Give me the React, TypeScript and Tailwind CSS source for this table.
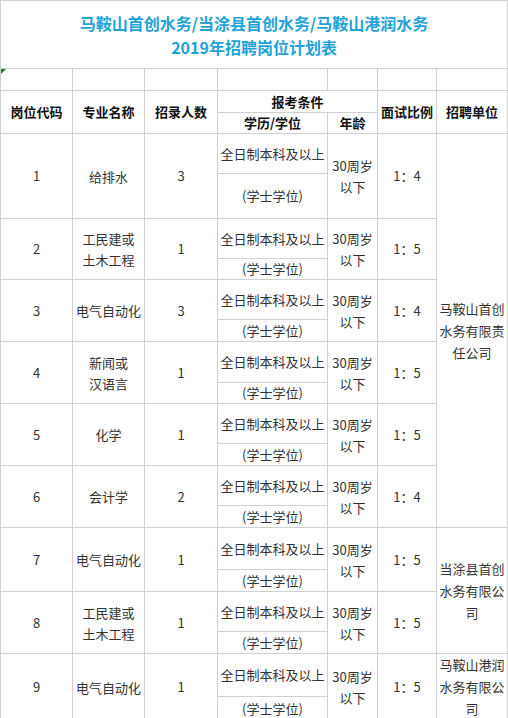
import React from "react";

type Row = {
  code: string;
  major: string[];
  count: string;
  ratio: string;
  top: string; // height of the upper sub-row
  bottom: string; // height of the lower sub-row
};

const ROWS: Row[] = [
  { code: "1", major: ["给排水"], count: "3", ratio: "1：4", top: "h-[40px]", bottom: "h-[45px]" },
  { code: "2", major: ["工民建或", "土木工程"], count: "1", ratio: "1：5", top: "h-[40px]", bottom: "h-[21px]" },
  { code: "3", major: ["电气自动化"], count: "3", ratio: "1：4", top: "h-[40px]", bottom: "h-[22px]" },
  { code: "4", major: ["新闻或", "汉语言"], count: "1", ratio: "1：5", top: "h-[41px]", bottom: "h-[21px]" },
  { code: "5", major: ["化学"], count: "1", ratio: "1：5", top: "h-[40px]", bottom: "h-[22px]" },
  { code: "6", major: ["会计学"], count: "2", ratio: "1：4", top: "h-[40px]", bottom: "h-[22px]" },
  { code: "7", major: ["电气自动化"], count: "1", ratio: "1：5", top: "h-[42px]", bottom: "h-[22px]" },
  { code: "8", major: ["工民建或", "土木工程"], count: "1", ratio: "1：5", top: "h-[40px]", bottom: "h-[22px]" },
  { code: "9", major: ["电气自动化"], count: "1", ratio: "1：5", top: "h-[42px]", bottom: "h-[23px]" },
];

// 招聘单位 spans several positions
const UNITS: Record<number, { span: number; lines: string[] }> = {
  0: { span: 12, lines: ["马鞍山首创", "水务有限责", "任公司"] },
  6: { span: 4, lines: ["当涂县首创", "水务有限公", "司"] },
  8: { span: 2, lines: ["马鞍山港润", "水务有限公", "司"] },
};

const cell = "border border-[#d0d0d0] p-0 text-center align-middle";

function Lines({ lines }: { lines: string[] }) {
  return (
    <>
      {lines.map((l, i) => (
        <div key={i}>{l}</div>
      ))}
    </>
  );
}

export default function App() {
  return (
    <div className="w-[508px] h-[718px] overflow-hidden bg-white font-['Noto_Sans_CJK_SC',sans-serif] text-[13px] text-[#333]">
      <table className="table-fixed border-collapse w-[507px]">
        <colgroup>
          <col className="w-[72px]" />
          <col className="w-[72px]" />
          <col className="w-[73px]" />
          <col className="w-[110px]" />
          <col className="w-[50px]" />
          <col className="w-[59px]" />
          <col className="w-[71px]" />
        </colgroup>
        <tbody>
          {/* 标题 */}
          <tr className="h-[68px]">
            <td colSpan={7} className={`${cell} text-[16px] font-bold leading-[24px] text-[#22a2d9]`}>
              <div>马鞍山首创水务/当涂县首创水务/马鞍山港润水务</div>
              <div>2019年招聘岗位计划表</div>
            </td>
          </tr>

          {/* 空行 */}
          <tr className="h-[22px]">
            <td className={`${cell} relative`}>
              <span className="absolute left-0 top-0 h-0 w-0 border-t-[5px] border-r-[5px] border-t-[#1f7a3a] border-r-transparent" />
            </td>
            <td className={cell} />
            <td className={cell} />
            <td className={cell} />
            <td className={cell} />
            <td className={cell} />
            <td className={cell} />
          </tr>

          {/* 表头 */}
          <tr className="h-[22px] font-bold text-[#111]">
            <td rowSpan={2} className={cell}>岗位代码</td>
            <td rowSpan={2} className={cell}>专业名称</td>
            <td rowSpan={2} className={cell}>招录人数</td>
            <td colSpan={2} className={cell}>报考条件</td>
            <td rowSpan={2} className={cell}>面试比例</td>
            <td rowSpan={2} className={cell}>招聘单位</td>
          </tr>
          <tr className="h-[21px] font-bold text-[#111]">
            <td className={cell}>学历/学位</td>
            <td className={cell}>年龄</td>
          </tr>

          {ROWS.map((r, i) => (
            <React.Fragment key={r.code}>
              <tr className={r.top}>
                <td rowSpan={2} className={cell}>{r.code}</td>
                <td rowSpan={2} className={`${cell} leading-[21px]`}>
                  <Lines lines={r.major} />
                </td>
                <td rowSpan={2} className={cell}>{r.count}</td>
                <td className={cell}>全日制本科及以上</td>
                <td rowSpan={2} className={`${cell} leading-[21px]`}>
                  <div>30周岁</div>
                  <div>以下</div>
                </td>
                <td rowSpan={2} className={cell}>{r.ratio}</td>
                {UNITS[i] && (
                  <td rowSpan={UNITS[i].span} className={`${cell} leading-[22px]`}>
                    <Lines lines={UNITS[i].lines} />
                  </td>
                )}
              </tr>
              <tr className={r.bottom}>
                <td className={cell}>(学士学位)</td>
              </tr>
            </React.Fragment>
          ))}
        </tbody>
      </table>
    </div>
  );
}
